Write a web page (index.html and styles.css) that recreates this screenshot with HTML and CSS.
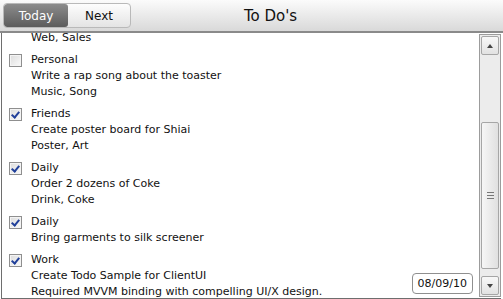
FILE: index.html
```html
<!DOCTYPE html>
<html lang="en">
<head>
    <meta charset="UTF-8">
    <meta name="viewport" content="width=device-width, initial-scale=1.0">
    <title>To Do's</title>
    <link rel="stylesheet" href="styles.css">
</head>
<body>
    <div class="app">
        <div class="header">
            <div class="segments">
                <div class="seg active">Today</div>
                <div class="seg">Next</div>
            </div>
            <h1>To Do's</h1>
        </div>

        <div class="content">
            <div class="viewport">
                <ul class="todos">
                    <!-- tail of the item scrolled above the top edge -->
                    <li class="todo">
                        <span class="check hidden"></span>
                        <div class="lines">
                            <div>Web, Sales</div>
                        </div>
                    </li>
                    <li class="todo">
                        <span class="check"></span>
                        <div class="lines">
                            <div>Personal</div>
                            <div>Write a rap song about the toaster</div>
                            <div>Music, Song</div>
                        </div>
                    </li>
                    <li class="todo">
                        <span class="check checked"></span>
                        <div class="lines">
                            <div>Friends</div>
                            <div>Create poster board for Shiai</div>
                            <div>Poster, Art</div>
                        </div>
                    </li>
                    <li class="todo">
                        <span class="check checked"></span>
                        <div class="lines">
                            <div>Daily</div>
                            <div>Order 2 dozens of Coke</div>
                            <div>Drink, Coke</div>
                        </div>
                    </li>
                    <li class="todo">
                        <span class="check checked"></span>
                        <div class="lines">
                            <div>Daily</div>
                            <div>Bring garments to silk screener</div>
                        </div>
                    </li>
                    <li class="todo">
                        <span class="check checked"></span>
                        <div class="lines">
                            <div>Work</div>
                            <div>Create Todo Sample for ClientUI</div>
                            <div>Required MVVM binding with compelling UI/X design.</div>
                        </div>
                    </li>
                </ul>
                <div class="date">08/09/10</div>
            </div>

            <div class="scrollbar">
                <div class="sb-btn"><span class="arrow up"></span></div>
                <div class="sb-track">
                    <div class="sb-thumb"><span class="grip"></span></div>
                </div>
                <div class="sb-btn"><span class="arrow down"></span></div>
            </div>
        </div>
    </div>
</body>
</html>
```

FILE: styles.css
```css
body {
    margin: 0;
    font-family: "DejaVu Sans", Verdana, sans-serif;
    background: #ffffff;
}

.app {
    width: 503px;
    height: 299px;
    display: flex;
    flex-direction: column;
    overflow: hidden;
}

.header {
    height: 31px;
    flex: none;
    display: flex;
    align-items: center;
    padding: 0 3px;
    background: linear-gradient(#fbfbfb, #d9d9d9);
    border-bottom: 2px solid #8a8a8a;
}

.segments {
    display: flex;
    height: 23px;
    border: 1px solid #b9b9b9;
    border-radius: 4px;
    overflow: hidden;
    background: linear-gradient(#fdfdfd, #e4e4e4);
}

.seg {
    display: flex;
    align-items: center;
    justify-content: center;
    font-size: 12px;
    color: #111;
    width: 62px;
}

.seg.active {
    width: 64px;
    color: #fff;
    background: linear-gradient(#8c8c8c, #5c5c5c);
    border-radius: 3px;
}

h1 {
    flex: 1;
    margin: 0;
    padding-right: 90px;
    text-align: center;
    font-size: 15px;
    font-weight: normal;
    color: #111;
}

.content {
    flex: 1;
    display: flex;
    border-left: 1px solid #6e6e6e;
    border-bottom: 1px solid #6e6e6e;
    margin-left: 1px;
    margin-right: 2px;
    min-height: 0;
}

.viewport {
    flex: 1;
    position: relative;
    overflow: hidden;
}

.todos {
    list-style: none;
    margin: -6px 0 0;
    padding: 0;
}

.todo {
    display: flex;
    gap: 9px;
    padding: 3px 0 3px 7px;
    font-size: 11px;
    line-height: 16px;
    color: #111;
}

.check {
    width: 11px;
    height: 11px;
    margin-top: 2px;
    flex: none;
    border: 1px solid #8f8f8f;
    background: linear-gradient(135deg, #dcdcdc, #fafafa);
    box-shadow: inset 0 0 0 1px #f4f4f4;
    position: relative;
}

.check.hidden {
    visibility: hidden;
}

.check.checked::after {
    content: "";
    position: absolute;
    left: 3px;
    top: 1px;
    width: 3px;
    height: 6px;
    border: solid #21409a;
    border-width: 0 2px 2px 0;
    transform: rotate(40deg);
}

.date {
    position: absolute;
    right: 6px;
    bottom: 4px;
    padding: 3px 5px;
    font-size: 11px;
    border: 1px solid #8f8f8f;
    border-radius: 4px;
    background: #fff;
    color: #111;
}

.scrollbar {
    width: 18px;
    margin: 1px 0 1px;
    display: flex;
    flex-direction: column;
    gap: 1px;
    border: 1px solid #9c9c9c;
    background: #ececec;
    padding: 1px;
}

.sb-btn {
    height: 17px;
    border: 1px solid #a6a6a6;
    border-radius: 2px;
    background: linear-gradient(#f8f8f8, #e2e2e2);
    display: flex;
    align-items: center;
    justify-content: center;
}

.arrow {
    width: 0;
    height: 0;
    border-left: 3px solid transparent;
    border-right: 3px solid transparent;
}

.arrow.up {
    border-bottom: 4px solid #444;
}

.arrow.down {
    border-top: 4px solid #444;
}

.sb-track {
    flex: 1;
    display: flex;
    flex-direction: column;
    justify-content: flex-end;
    padding: 66px 0 6px;
}

.sb-thumb {
    flex: 1;
    border: 1px solid #a6a6a6;
    border-radius: 2px;
    background: linear-gradient(90deg, #f6f6f6, #e0e0e0);
    display: flex;
    align-items: center;
    justify-content: center;
}

.grip {
    width: 7px;
    height: 7px;
    background: repeating-linear-gradient(#777 0 1px, transparent 1px 3px);
}
```
